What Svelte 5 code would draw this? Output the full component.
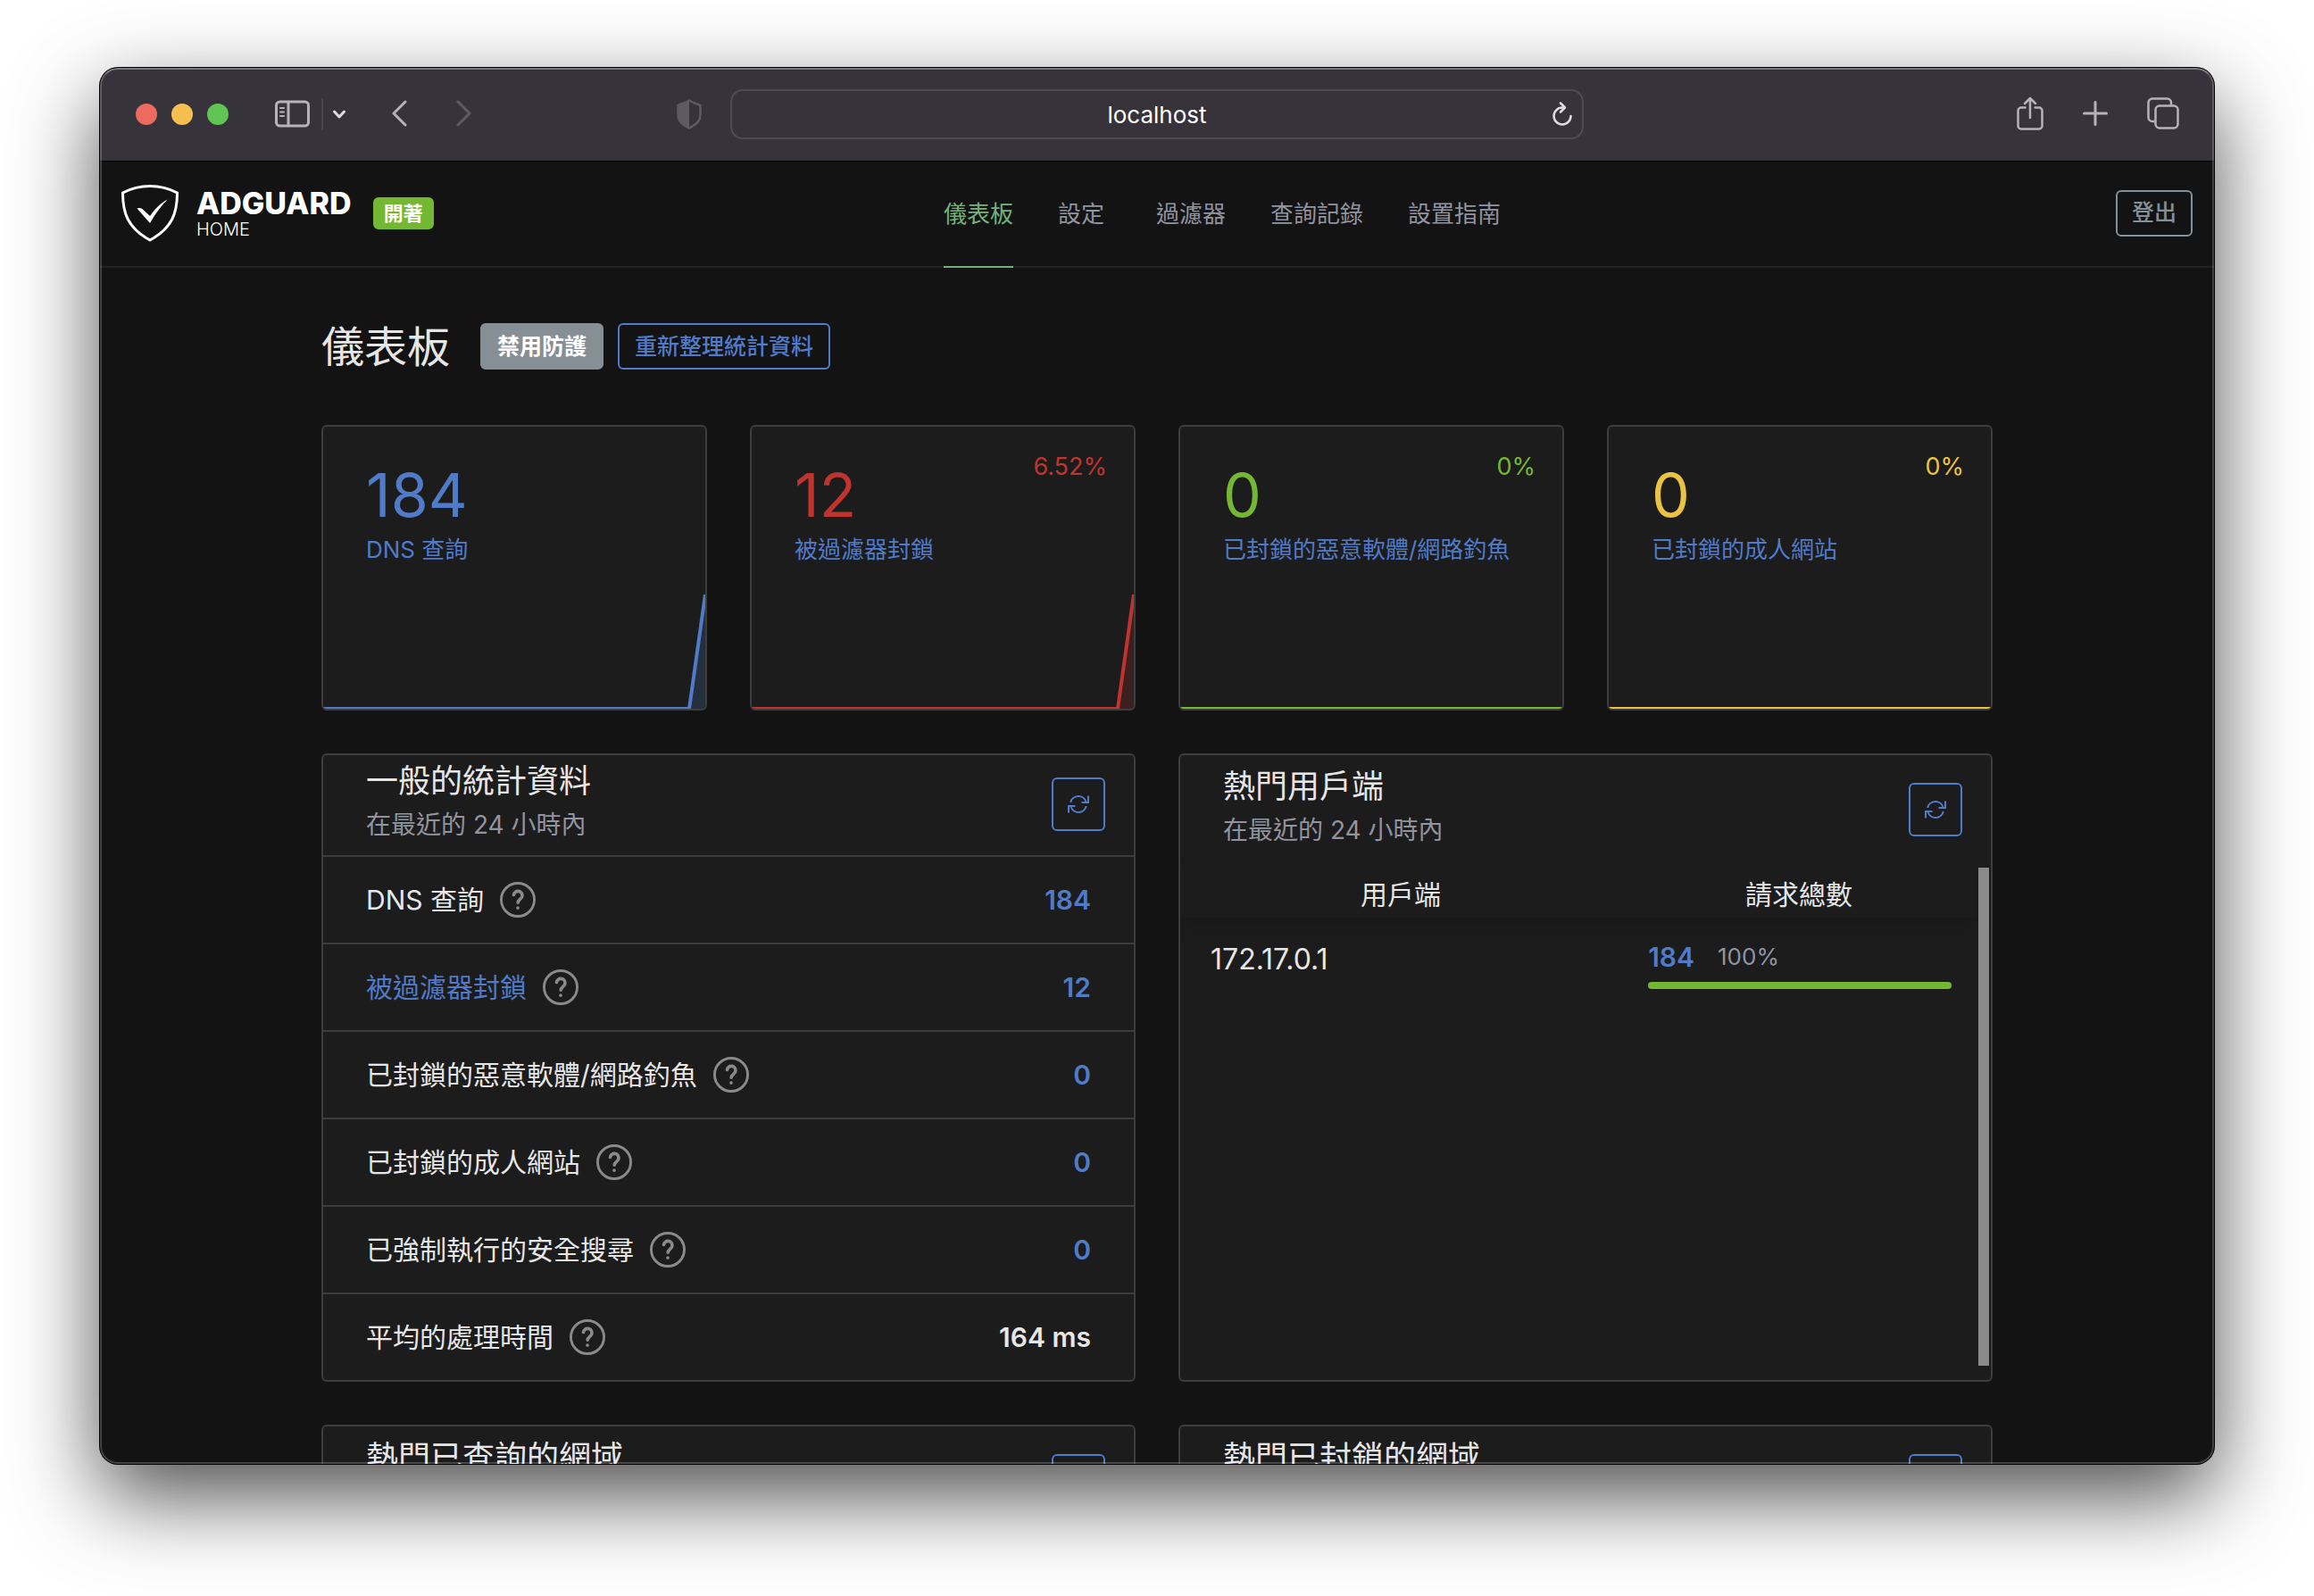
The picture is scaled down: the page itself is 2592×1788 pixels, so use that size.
<script lang="ts">
  const nav = [
    { label: '儀表板', active: true },
    { label: '設定', dropdown: true },
    { label: '過濾器' },
    { label: '查詢記錄' },
    { label: '設置指南' },
  ];

  const cards = [
    { value: '184', label: 'DNS 查詢', percent: '', color: 'blue', peak: 1 },
    { value: '12', label: '被過濾器封鎖', percent: '6.52%', color: 'red', peak: 1 },
    { value: '0', label: '已封鎖的惡意軟體/網路釣魚', percent: '0%', color: 'green', peak: 0 },
    { value: '0', label: '已封鎖的成人網站', percent: '0%', color: 'yellow', peak: 0 },
  ];

  const counters = [
    { label: 'DNS 查詢', value: '184' },
    { label: '被過濾器封鎖', value: '12', link: true },
    { label: '已封鎖的惡意軟體/網路釣魚', value: '0' },
    { label: '已封鎖的成人網站', value: '0' },
    { label: '已強制執行的安全搜尋', value: '0' },
    { label: '平均的處理時間', value: '164 ms', plain: true },
  ];

  const clients = [{ name: '172.17.0.1', count: 184, percent: 100 }];

  const period = '在最近的 24 小時內';
</script>

{#snippet refresh()}
  <button type="button" class="refresh" aria-label="重新整理">
    <svg viewBox="0 0 24 20" width="24" height="20" fill="none" stroke="currentColor" stroke-width="2">
      <path d="M3.200 8A9 9 0 0 1 20.500 7.200M23 .5V8h-7.500" />
      <path d="M20.800 12A9 9 0 0 1 3.500 12.800M1 19.500V12h7.500" />
    </svg>
  </button>
{/snippet}

{#snippet cardHead(title: string, subtitle: string)}
  <div class="titles">
    <h2>{title}</h2>
    {#if subtitle}<p>{subtitle}</p>{/if}
  </div>
  {@render refresh()}
{/snippet}

<div class="desktop">
  <div class="window">
    <div class="toolbar">
      <div class="left">
        <div class="lights"><i class="close"></i><i class="min"></i><i class="max"></i></div>
        <button type="button" class="tool sidebar" aria-label="Sidebar">
          <svg width="40" height="32" viewBox="0 0 40 32" fill="none" stroke="currentColor" stroke-width="3">
            <rect x="1.500" y="2" width="36" height="27" rx="4" />
            <path d="M15 3v26" />
            <path d="M6 9h4M6 13.500h4M6 18h4" stroke-width="2" stroke-linecap="round" />
          </svg>
        </button>
        <span class="divider"></span>
        <button type="button" class="tool menu" aria-label="Tab groups">
          <svg width="16" height="12" viewBox="0 0 16 12" fill="none" stroke="currentColor" stroke-width="3" stroke-linecap="round" stroke-linejoin="round"><path d="M2.500 3 8 9l5.500-6" /></svg>
        </button>
        <button type="button" class="tool back" aria-label="Back">
          <svg width="20" height="32" viewBox="0 0 20 32" fill="none" stroke="currentColor" stroke-width="3" stroke-linecap="round" stroke-linejoin="round"><path d="M16 2 3 15l13 13" /></svg>
        </button>
        <button type="button" class="tool forward" aria-label="Forward">
          <svg width="20" height="32" viewBox="0 0 20 32" fill="none" stroke="currentColor" stroke-width="3" stroke-linecap="round" stroke-linejoin="round"><path d="m3 2 13 13L3 28" /></svg>
        </button>
        <button type="button" class="tool privacy" aria-label="Privacy report">
          <svg width="28" height="34" viewBox="0 0 28 34">
            <path d="M14 1.500C10 4.500 5 5 1.500 7v11c0 7 6 11.500 12.500 14.500C20.500 29.500 26.500 25 26.500 18V7C23 5 18 4.500 14 1.500z" fill="none" stroke="currentColor" stroke-width="2.500" stroke-linejoin="round" />
            <path d="M14 1.500C10 4.500 5 5 1.500 7v11c0 7 6 11.500 12.500 14.500z" fill="currentColor" />
          </svg>
        </button>
      </div>
      <div class="address">
        <input type="text" value="localhost" aria-label="Address" />
        <button type="button" class="tool reload" aria-label="Reload">
          <svg width="24" height="28" viewBox="0 0 24 28" fill="none" stroke="currentColor" stroke-width="2.500" stroke-linecap="round" stroke-linejoin="round">
            <path d="M13 6.500h-1a9.500 9.500 0 1 0 9.500 9.500" />
            <path d="M10 1.500l5 5-5 5" />
          </svg>
        </button>
      </div>
      <div class="right">
        <button type="button" class="tool" aria-label="Share">
          <svg width="30" height="40" viewBox="0 0 30 40" fill="none" stroke="currentColor" stroke-width="2.500" stroke-linecap="round" stroke-linejoin="round">
            <path d="M9.500 12.500H5A3.500 3.500 0 0 0 1.500 16v17A3.500 3.500 0 0 0 5 36.500h20a3.500 3.500 0 0 0 3.500-3.500V16a3.500 3.500 0 0 0-3.500-3.500h-4.500" />
            <path d="M15 24V2M9 8l6-6 6 6" />
          </svg>
        </button>
        <button type="button" class="tool" aria-label="New tab">
          <svg width="28" height="30" viewBox="0 0 28 30" fill="none" stroke="currentColor" stroke-width="3" stroke-linecap="round"><path d="M14 1.500v25M1.500 14h25" /></svg>
        </button>
        <button type="button" class="tool" aria-label="Tab overview">
          <svg width="36" height="38" viewBox="0 0 36 38" fill="none" stroke="currentColor" stroke-width="2.500">
            <rect x="9.500" y="9.500" width="25" height="25" rx="4.500" />
            <path d="M9 27H6a4.500 4.500 0 0 1-4.500-4.500V6A4.500 4.500 0 0 1 6 1.500h16.500A4.500 4.500 0 0 1 27 6v3" />
          </svg>
        </button>
      </div>
    </div>

    <header class="header">
      <div class="brand">
        <svg class="shield" width="64" height="64" viewBox="0 0 64 64">
          <path d="M32 1.500c10 0 21 2.500 30.500 7.500 0 22-5 39-30.500 53C6.500 48 1.500 31 1.500 9 11 4 22 1.500 32 1.500z" fill="none" stroke="#fff" stroke-width="3" />
          <path d="M17.500 26.500c3.500-1.500 6.500.5 8.500 3l6 5.500c6-8 11-14 19.500-18.500C44 24.500 37.500 33 32 43z" fill="#fff" />
        </svg>
        <div class="wordmark"><b>ADGUARD</b><span>HOME</span></div>
        <span class="badge">開著</span>
      </div>
      <nav>
        {#each nav as item}
          <a href="#top" class:active={item.active} class:dropdown={item.dropdown}>{item.label}</a>
        {/each}
      </nav>
      <a class="btn outline-gray" href="#logout">登出</a>
    </header>

    <main>
      <div class="page-title">
        <h1>儀表板</h1>
        <button type="button" class="btn gray">禁用防護</button>
        <button type="button" class="btn outline-blue">重新整理統計資料</button>
      </div>

      <div class="stats">
        {#each cards as card}
          <section class="card stat {card.color}">
            <div class="stat-body">
              <div class="number">{card.value}</div>
              <a href="#logs">{card.label}</a>
            </div>
            {#if card.percent}<div class="percent">{card.percent}</div>{/if}
            <svg class="chart" viewBox="0 0 428 128" preserveAspectRatio="none">
              {#if card.peak}
                <path class="area" d="M0 128H410L428 0V128z" />
                <path class="line" d="M0 128H410L428 0" />
              {:else}
                <path class="line" d="M0 128H428" />
              {/if}
            </svg>
          </section>
        {/each}
      </div>

      <div class="panels">
        <section class="card">
          <div class="card-header ruled">{@render cardHead('一般的統計資料', period)}</div>
          <table class="counters">
            <tbody>
              {#each counters as row}
                <tr>
                  <td>
                    <div class="name">
                      {#if row.link}<a href="#logs">{row.label}</a>{:else}<span>{row.label}</span>{/if}
                      <svg class="help" width="40" height="40" viewBox="1 1 22 22" fill="none" stroke="currentColor" stroke-linecap="round" stroke-linejoin="round">
                        <circle cx="12" cy="12" r="10.200" stroke-width="1.600" />
                        <path d="M9.500 9a2.600 2.600 0 0 1 5.200.6c0 1.900-2.600 2.200-2.600 4.200M12 17v.1" stroke-width="2" />
                      </svg>
                    </div>
                  </td>
                  <td class="value" class:plain={row.plain}>{row.value}</td>
                </tr>
              {/each}
            </tbody>
          </table>
        </section>

        <section class="card clients">
          <div class="card-header tall">{@render cardHead('熱門用戶端', period)}</div>
          <div class="scroller">
            <table>
              <thead>
                <tr><th class="wide">用戶端</th><th>請求總數</th></tr>
              </thead>
              <tbody>
                {#each clients as client}
                  <tr>
                    <td class="ip">{client.name}</td>
                    <td>
                      <div class="amount"><b>{client.count}</b><span>{client.percent}%</span></div>
                      <div class="bar"><div style="width: {client.percent}%"></div></div>
                    </td>
                  </tr>
                {/each}
              </tbody>
            </table>
            <div class="scrollbar"></div>
          </div>
        </section>

        <section class="card">
          <div class="card-header tall">{@render cardHead('熱門已查詢的網域', '')}</div>
        </section>
        <section class="card">
          <div class="card-header tall">{@render cardHead('熱門已封鎖的網域', '')}</div>
        </section>
      </div>
    </main>
  </div>
</div>

<style>
  :global(body) {
    background: #fff;
  }
  .desktop {
    --blue: #507bc9;
    --gray: #868e96;
    --line: #3d3d3d;
    box-sizing: border-box;
    height: 100vh;
    padding: 76px 112px 148px;
    overflow: hidden;
    font-family: Inter, 'Noto Sans CJK TC', sans-serif;
    font-size: 30px;
    color: #e6e6e6;
  }
  .desktop :global(*) {
    box-sizing: border-box;
  }
  .window {
    position: relative;
    display: flex;
    flex-direction: column;
    height: 100%;
    overflow: hidden;
    border-radius: 20px;
    background: #131313;
    box-shadow: 0 0 0 1px #000, 0 36px 96px rgba(0, 0, 0, 0.7);
  }
  /* light rim drawn over the window content */
  .window::after {
    content: '';
    position: absolute;
    inset: 0;
    border: 2px solid rgba(255, 255, 255, 0.2);
    border-top-color: rgba(255, 255, 255, 0.35);
    border-radius: 20px;
    pointer-events: none;
  }
  button {
    padding: 0;
    border: 0;
    background: none;
    font: inherit;
    color: inherit;
    cursor: pointer;
  }
  a {
    color: var(--blue);
    text-decoration: none;
  }
  svg {
    display: block;
    flex-shrink: 0;
  }

  .toolbar {
    display: grid;
    grid-template-columns: 1fr minmax(0, 956px) 1fr;
    align-items: center;
    flex-shrink: 0;
    height: 105px;
    border-bottom: 1px solid #000;
    background: #36343a;
    color: #b5b3b9;
  }
  .left,
  .right {
    display: flex;
    align-items: center;
  }
  .left {
    padding: 0 32px 0 40px;
  }
  .right {
    justify-content: flex-end;
    gap: 44px;
    padding-right: 39px;
  }
  .lights {
    display: flex;
    gap: 16px;
    margin-right: 52px;
  }
  .lights i {
    width: 24px;
    height: 24px;
    border-radius: 50%;
  }
  .close {
    background: #ed6a5e;
  }
  .min {
    background: #f4bf4f;
  }
  .max {
    background: #61c554;
  }
  .divider {
    width: 2px;
    height: 36px;
    margin: 0 10px 0 12px;
    background: #47454c;
  }
  .menu {
    margin-right: 50px;
    color: #dddce0;
  }
  .back {
    margin-right: 52px;
  }
  .forward,
  .privacy {
    color: #5d5b61;
  }
  .privacy {
    margin-left: auto;
  }
  .address {
    display: flex;
    align-items: center;
    height: 56px;
    padding: 0 10px 0 34px;
    border: 2px solid #4d4b51;
    border-radius: 14px;
  }
  .address input {
    flex: 1;
    min-width: 0;
    padding: 0;
    border: 0;
    outline: 0;
    background: none;
    font: inherit;
    font-size: 26px;
    text-align: center;
    color: #fff;
  }
  .reload {
    color: #dddce0;
  }

  .header {
    display: grid;
    grid-template-columns: 39.7% 1fr auto;
    align-items: center;
    flex-shrink: 0;
    height: 119px;
    padding: 0 24px 2px;
    border-bottom: 2px solid #222;
  }
  .brand {
    display: flex;
    align-items: center;
  }
  .wordmark {
    display: flex;
    flex-direction: column;
    margin: 0 24px 0 20px;
    padding-top: 4px;
    color: #fff;
  }
  .wordmark b {
    font-size: 34px;
    font-weight: 800;
    line-height: 32px;
  }
  .wordmark span {
    font-size: 20px;
    font-weight: 300;
    line-height: 26px;
  }
  .badge {
    padding: 0 12px;
    border-radius: 6px;
    background: #74b733;
    font-size: 22px;
    font-weight: 700;
    line-height: 36px;
    color: #fff;
  }
  nav {
    display: flex;
    align-self: stretch;
    gap: 50px;
    margin-bottom: -4px;
  }
  nav a {
    display: flex;
    align-items: center;
    padding-bottom: 4px;
    border-bottom: 2px solid transparent;
    font-size: 26px;
    white-space: nowrap;
    color: #9094a0;
  }
  nav a.active {
    border-color: #73b17b;
    color: #73b17b;
  }
  nav a.dropdown {
    padding-right: 8px;
  }
  .btn {
    height: 52px;
    padding: 0 16px;
    border: 2px solid;
    border-radius: 6px;
    font-size: 25px;
    font-weight: 500;
    line-height: 46px;
    white-space: nowrap;
  }
  .outline-gray {
    color: var(--gray);
  }
  .gray {
    border-color: var(--gray);
    background: var(--gray);
    font-weight: 700;
    color: #fff;
  }
  .outline-blue {
    border-color: var(--blue);
    color: var(--blue);
  }

  main {
    width: 100%;
    max-width: 1920px;
    margin: 0 auto;
    padding: 62px 24px 0;
  }
  .page-title {
    display: flex;
    align-items: center;
    gap: 16px;
    margin-bottom: 62px;
  }
  .page-title .btn {
    padding: 0 17px;
  }
  h1 {
    margin: 0 18px 0 0;
    padding-top: 2px;
    font-size: 48px;
    font-weight: 400;
    line-height: 50px;
  }
  .stats,
  .panels {
    display: grid;
    gap: 48px;
    margin-bottom: 48px;
  }
  .stats {
    grid-template-columns: repeat(4, 1fr);
  }
  .panels {
    grid-template-columns: repeat(2, 1fr);
  }
  .card {
    border: 2px solid var(--line);
    border-radius: 6px;
    background: #1c1c1c;
    overflow: hidden;
  }
  .stat {
    position: relative;
    display: flex;
    flex-direction: column;
    height: 320px;
  }
  .stat.blue {
    color: var(--blue);
  }
  .stat.red {
    color: #bf342e;
  }
  .stat.green {
    color: #74b733;
  }
  .stat.yellow {
    color: #eac343;
  }
  .stat-body {
    padding: 44px 0 0 48px;
  }
  .number {
    font-size: 68px;
    line-height: 64px;
  }
  .stat-body a {
    display: block;
    font-size: 26px;
    line-height: 60px;
    white-space: nowrap;
  }
  .percent {
    position: absolute;
    top: 28px;
    right: 30px;
    font-size: 27px;
    line-height: 34px;
  }
  .chart {
    width: 100%;
    height: 128px;
    margin-top: auto;
  }
  .line {
    fill: none;
    stroke: currentColor;
    stroke-width: 4;
  }
  .area {
    fill: currentColor;
    opacity: 0.2;
  }

  .card-header {
    display: flex;
    align-items: center;
    justify-content: space-between;
    height: 114px;
    padding: 0 32px 0 48px;
    border-bottom: 2px solid transparent;
  }
  .card-header.ruled {
    border-color: var(--line);
  }
  .card-header.tall {
    height: 126px;
    border-color: #1b1c20;
  }
  .titles {
    min-height: 98px;
  }
  h2 {
    margin: 0;
    font-size: 36px;
    font-weight: 400;
    line-height: 44px;
  }
  p {
    margin: 0;
    font-size: 28px;
    line-height: 54px;
    color: #9094a0;
  }
  .refresh {
    display: grid;
    place-items: center;
    width: 60px;
    height: 60px;
    margin-bottom: 2px;
    border: 2px solid var(--blue);
    border-radius: 6px;
    color: var(--blue);
  }

  table {
    width: 100%;
    border-spacing: 0;
  }
  .counters td {
    height: 98px;
    padding: 0 48px;
    border-bottom: 2px solid var(--line);
  }
  .counters tr:last-child td {
    height: 96px;
    border-bottom: 0;
  }
  .name {
    display: flex;
    align-items: center;
    gap: 18px;
    line-height: 40px;
  }
  .help {
    color: #8a8a8a;
  }
  .counters .value {
    font-weight: 600;
    text-align: right;
    color: var(--blue);
  }
  .counters .plain {
    color: inherit;
  }

  .clients {
    display: flex;
    flex-direction: column;
  }
  .scroller {
    display: flex;
    flex: 1;
    align-items: flex-start;
    padding: 0 2px 16px 0;
  }
  .scrollbar {
    flex-shrink: 0;
    align-self: stretch;
    width: 12px;
    margin-left: 2px;
    background: #8a8a8a;
  }
  .clients thead {
    box-shadow: 0 8px 24px rgba(0, 0, 0, 0.15);
  }
  th {
    height: 56px;
    padding: 0;
    font-weight: 400;
  }
  th.wide {
    width: 55.400%;
  }
  .clients td {
    padding: 24px 28px 0 30px;
    vertical-align: top;
  }
  .clients .ip {
    padding-left: 34px;
    font-size: 32px;
    line-height: 46px;
  }
  .amount {
    display: flex;
    align-items: center;
    gap: 26px;
    line-height: 40px;
  }
  .amount b {
    font-weight: 600;
    color: var(--blue);
  }
  .amount span {
    font-size: 26px;
    color: #9094a0;
  }
  .bar {
    height: 8px;
    margin-top: 8px;
    border-radius: 4px;
    background: #333;
    overflow: hidden;
  }
  .bar div {
    height: 100%;
    background: #74b733;
  }
</style>
